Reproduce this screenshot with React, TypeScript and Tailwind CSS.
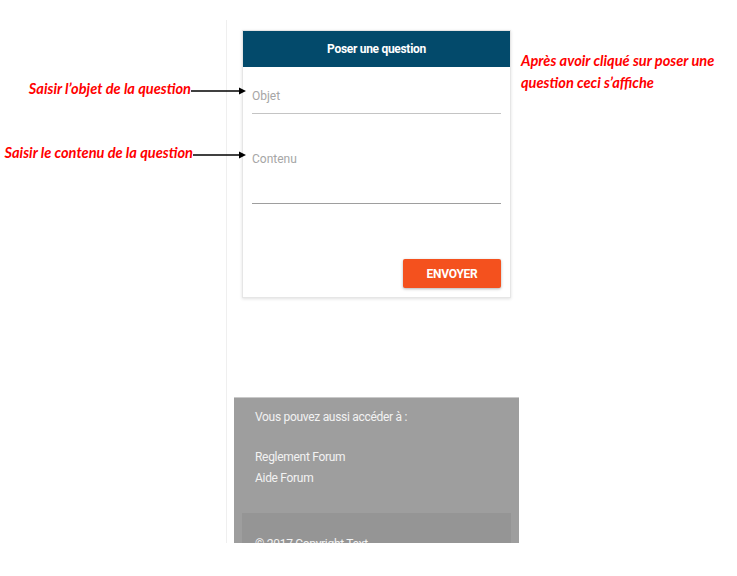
import React from "react";

function Arrow({ width }: { width: number }) {
  return (
    <svg width={width} height="8" viewBox={`0 0 ${width} 8`} className="block">
      <line x1="0" y1="4" x2={width - 6} y2="4" stroke="#000" strokeWidth="1.6" />
      <polygon points={`${width - 7},0.5 ${width},4 ${width - 7},7.5`} fill="#000" />
    </svg>
  );
}

const note = "text-[#ff0000] font-bold italic text-[14.6px] [font-family:Lato,'Liberation_Sans',sans-serif] leading-none";

export default function App() {
  return (
    <div className="relative w-[737px] h-[576px] bg-white overflow-hidden [font-family:Roboto,'Liberation_Sans',sans-serif]">
      <div className="pl-[226px] pt-[20px]">
        <div className="border-l border-[#efefef] h-[523px] overflow-hidden pt-[10px] w-[300px]">
          {/* question card */}
          <div className="ml-[15px] w-[269px] bg-white border border-[#e6e6e6] shadow-[0_1px_3px_rgba(0,0,0,0.12)] flex flex-col">
            <div className="h-[36px] bg-[#034a6b] flex items-center justify-center text-white text-[12px] font-bold tracking-[-0.3px]">
              Poser une question
            </div>
            <div className="px-[9px] pt-[14px] pb-[9px] flex flex-col">
              <input
                placeholder="Objet"
                className="h-[33px] pb-[3px] border-b border-[#c4c4c4] text-[12px] outline-none placeholder-[#a6a6a6] bg-transparent"
              />
              <textarea
                placeholder="Contenu"
                className="mt-[37px] h-[53px] resize-none border-b border-[#9e9e9e] text-[12px] leading-[16px] outline-none placeholder-[#a6a6a6] bg-transparent"
              />
              <div className="mt-[55px] flex justify-end">
                <button className="w-[98px] h-[29px] bg-[#f4511e] text-white text-[12px] font-bold tracking-[-0.3px] rounded-[2px] shadow-[0_1px_3px_rgba(0,0,0,0.3)]">
                  ENVOYER
                </button>
              </div>
            </div>
          </div>

          {/* footer */}
          <div className="ml-[7px] mt-[99px] w-[285px] bg-[#9e9e9e] border-t border-[#c9c9c9] text-[#f2f2f2] text-[12px] tracking-[-0.3px]">
            <div className="pl-[21px] pt-[11px] pb-[27px] flex flex-col">
              <p className="leading-[16px]">Vous pouvez aussi accéder à :</p>
              <p className="mt-[24px] leading-[16px]">Reglement Forum</p>
              <p className="mt-[5px] leading-[16px]">Aide Forum</p>
            </div>
            <div className="mx-[8px] bg-[#959595] h-[60px] pl-[13px] pt-[23px]">
              <p className="leading-[16px]">© 2017 Copyright Text</p>
            </div>
          </div>
        </div>
      </div>

      {/* annotations */}
      <div className="absolute left-0 top-[82px] w-[246px] flex items-center justify-end">
        <span className={note}>Saisir l’objet de la question</span>
        <div className="mt-[4px]">
          <Arrow width={55} />
        </div>
      </div>
      <div className="absolute left-0 top-[146px] w-[246px] flex items-center justify-end">
        <span className={note}>Saisir le contenu de la question</span>
        <div className="mt-[4px]">
          <Arrow width={53} />
        </div>
      </div>
      <div className={`absolute left-[521px] top-[54px] flex flex-col gap-[7px] ${note}`}>
        <span>Après avoir cliqué sur poser une</span>
        <span>question ceci s’affiche</span>
      </div>
    </div>
  );
}
